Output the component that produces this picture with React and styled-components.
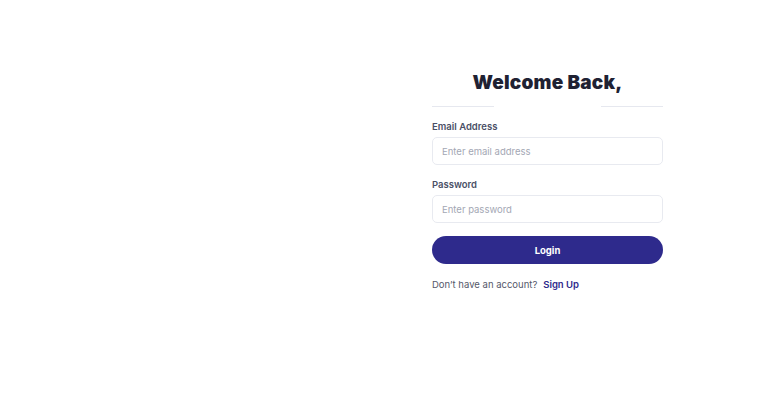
import React, {useState} from 'react'
import styled, {createGlobalStyle} from 'styled-components'

const GlobalStyle = createGlobalStyle`
    * {
        box-sizing: border-box;
    }
    body {
        margin: 0;
        background: #ffffff;
        font-family: Inter, 'Noto Sans', sans-serif;
    }
`

const App = () => {
    const [email, setEmail] = useState('')
    const [password, setPassword] = useState('')

    const handleLogin = (e) => {
        e.preventDefault()
    }

    return (
        <>
            <GlobalStyle />
            <Page>
                <Aside />
                <Panel>
                    <Form onSubmit={handleLogin}>
                        <Title>Welcome Back,</Title>
                        <Divider>
                            <Line />
                            <Line />
                        </Divider>
                        <Label htmlFor="email">Email Address</Label>
                        <Input
                            id="email"
                            type="email"
                            placeholder="Enter email address"
                            value={email}
                            onChange={(e) => setEmail(e.target.value)}
                        />
                        <Label htmlFor="password" $gap={13}>Password</Label>
                        <Input
                            id="password"
                            type="password"
                            placeholder="Enter password"
                            value={password}
                            onChange={(e) => setPassword(e.target.value)}
                        />
                        <SubmitButton type="submit">Login</SubmitButton>
                        <Footer>
                            Don’t have an account?
                            <SignUp href="#">Sign Up</SignUp>
                        </Footer>
                    </Form>
                </Panel>
            </Page>
        </>
    )
}

export default App

const Page = styled.div`
    display: grid;
    grid-template-columns: 1fr 1fr;
    min-height: 100vh;
`
const Aside = styled.div``
const Panel = styled.div`
    padding: 71px 94px 0 54px;
`
const Form = styled.form`
    display: flex;
    flex-direction: column;
    width: 231px;
`
const Title = styled.h1`
    margin: 0;
    font-family: Inter, sans-serif;
    font-size: 19px;
    line-height: 24px;
    font-weight: 900;
    letter-spacing: 0.2px;
    text-align: center;
    color: #1f2233;
`
const Divider = styled.div`
    display: flex;
    justify-content: space-between;
    margin-top: 11px;
`
const Line = styled.span`
    width: 62px;
    height: 1px;
    background: #e6e8ef;
`
const Label = styled.label`
    margin-top: ${({$gap}) => $gap ?? 13}px;
    margin-bottom: 3px;
    font-size: 9.5px;
    line-height: 14px;
    font-weight: 600;
    color: #4a4f66;
`
const Input = styled.input`
    height: 28px;
    padding: 0 9px;
    border: 1px solid #e8eaf0;
    border-radius: 5px;
    font-family: Inter, sans-serif;
    font-size: 9.5px;
    color: #2a2d3c;
    outline: none;
    &::placeholder {
        color: #a3a7b4;
    }
`
const SubmitButton = styled.button`
    margin-top: 13px;
    height: 28px;
    border: none;
    border-radius: 14px;
    background: #2e2a8c;
    color: #ffffff;
    font-family: Inter, sans-serif;
    font-size: 9.5px;
    font-weight: 700;
    cursor: pointer;
`
const Footer = styled.p`
    margin: 14px 0 0;
    display: flex;
    align-items: center;
    gap: 6px;
    font-size: 9.5px;
    line-height: 14px;
    color: #55586a;
`
const SignUp = styled.a`
    font-weight: 600;
    color: #2e2a8c;
    text-decoration: none;
`
